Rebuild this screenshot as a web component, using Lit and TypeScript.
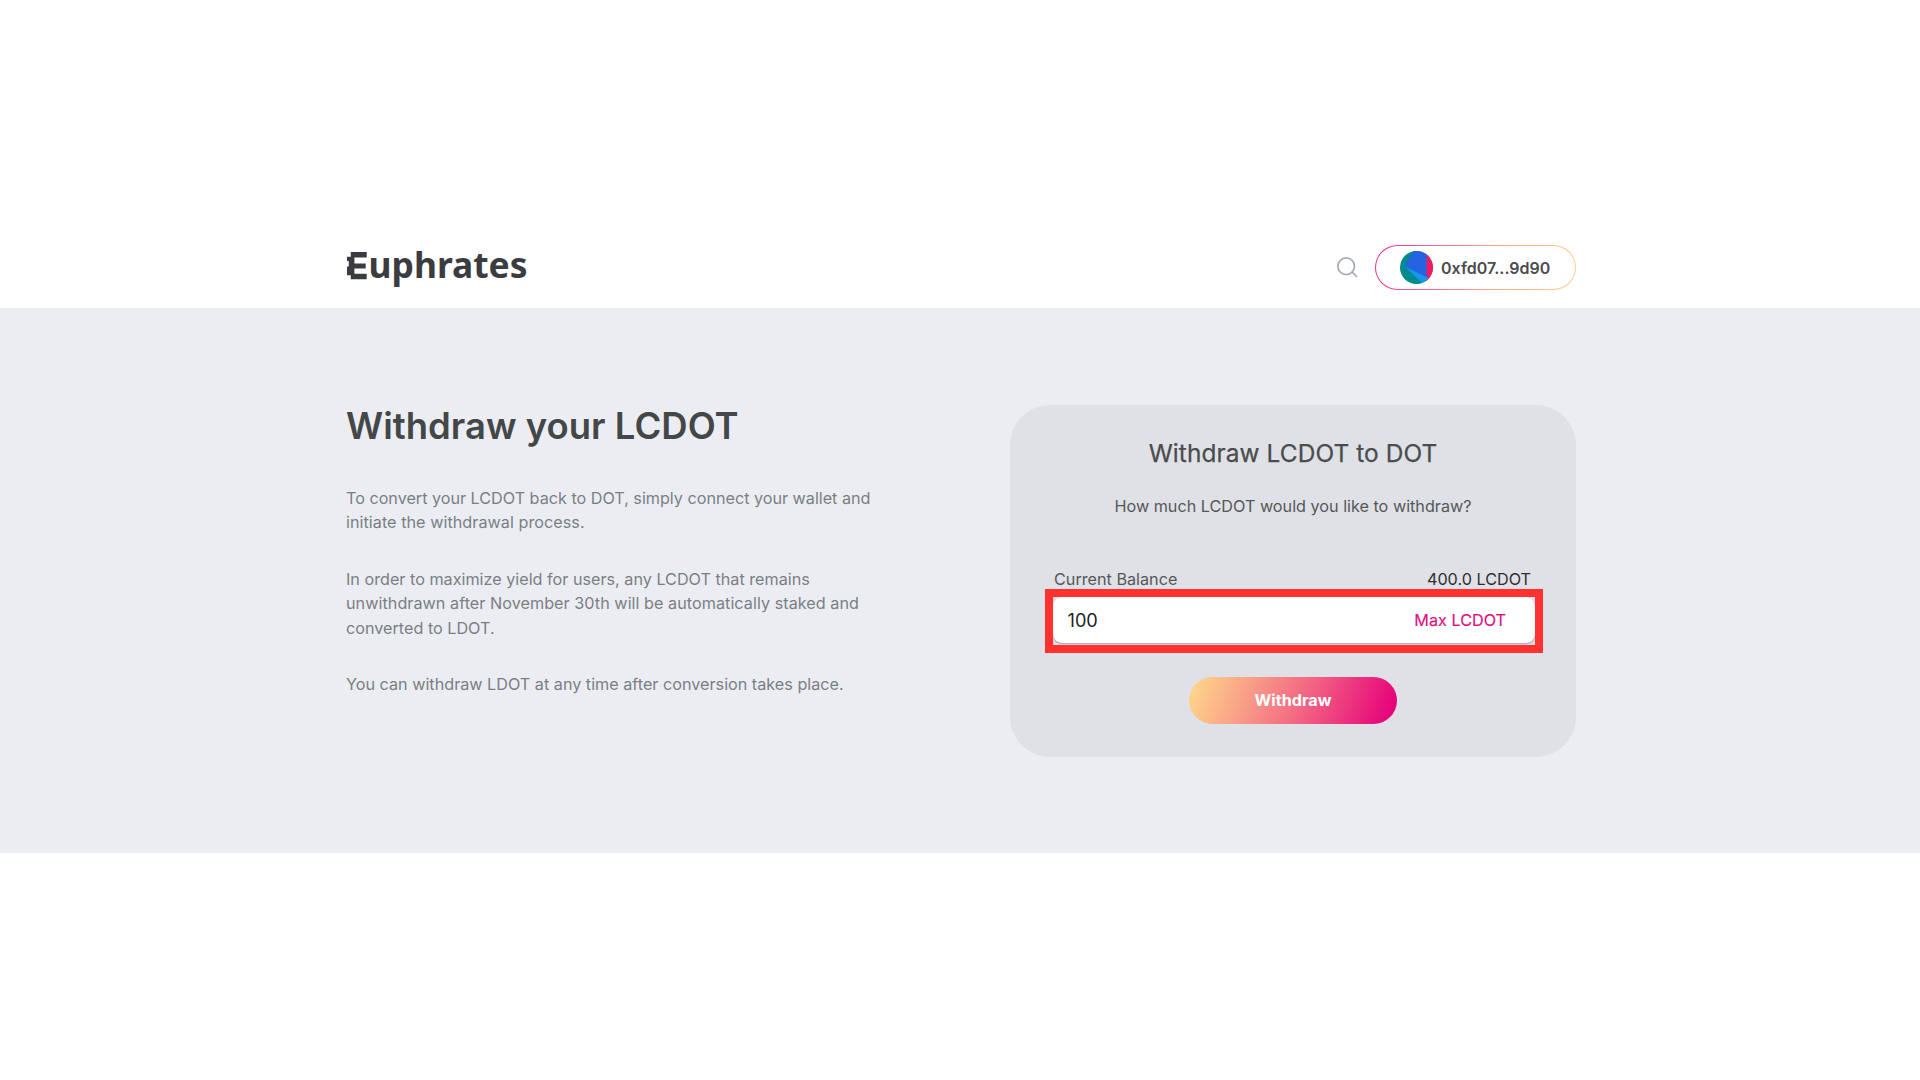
import { LitElement, html, css } from "lit";
import { customElement, state } from "lit/decorators.js";

@customElement("app-root")
export class AppRoot extends LitElement {
  @state() private amount = "100";

  static styles = css`
    :host { display: block; height: 1080px; background: #fff; overflow: hidden; box-sizing: border-box; padding-top: 183px; font-family: Inter, "Liberation Sans", sans-serif; color: #434747; }
    * { box-sizing: border-box; margin: 0; }
    .header { height: 125px; padding: 44px 344px 0 346px; display: flex; align-items: center; justify-content: space-between; }
    .logo, .search, .avatar { display: block; flex: none; }
    .logo { overflow: visible; }
    .word { font-family: "Noto Sans", sans-serif; font-weight: 700; font-size: 36.5px; fill: #3b3c3f; }
    .tools { display: flex; height: 81px; align-items: flex-start; padding-top: 18px; }
    .search { margin: 12px 17.5px 0 0; }
    .wallet { width: 201px; height: 45px; border: 1px solid transparent; border-radius: 23px; background: linear-gradient(#fff, #fff) padding-box, linear-gradient(105deg, #e9288b, #f9a08f 55%, #ffd08a) border-box; display: flex; align-items: center; padding-left: 24px; font: 600 16px/20px Inter, sans-serif; color: #4b4c4c; gap: 8px; white-space: nowrap; }
    .main { height: 545px; background: #ecedf3; padding: 97px 344px 0 346px; display: flex; justify-content: space-between; }
    .intro { width: 560px; font-size: 16.2px; line-height: 24.3px; color: #7a7f84; }
    .title { font-size: 36.45px; line-height: 44px; font-weight: 600; letter-spacing: 0.03px; color: #434747; margin-bottom: 38.2px; margin-top: -1px; white-space: nowrap; }
    .para { margin-bottom: 32.3px; white-space: nowrap; }
    .loose { letter-spacing: 0.035px; }
    .tight { letter-spacing: -0.015px; }
    .card { width: 566px; height: 352px; border-radius: 40px; background: #e0e1e6; padding: 32.4px 43px 0; display: flex; flex-direction: column; }
    .subtitle { text-align: center; font-size: 24.4px; line-height: 32px; font-weight: 400; letter-spacing: 0.1px; color: #4a4c4d; -webkit-text-stroke: 0.25px #4a4c4d; }
    .ask { text-align: center; font-size: 16.2px; line-height: 24px; margin-top: 24.6px; color: #555859; }
    .balance { display: flex; justify-content: space-between; font-size: 16.2px; line-height: 24px; margin-top: 49px; padding: 0 2px 0 1px; color: #555859; }
    .value { color: #2d2f30; }
    .field { position: relative; width: 482px; height: 46px; margin-top: 6px; background: #fff; border-radius: 9px; box-shadow: 0 1px 2px rgba(0,0,0,.3); display: flex; align-items: center; justify-content: space-between; padding: 0 29px 0 14.5px; }
    .amount { border: 0; outline: 0; padding: 0; width: 200px; background: none; font: 400 18.2px/24px Inter, sans-serif; color: #1e1e20; }
    .max { font-size: 16.2px; font-weight: 400; color: #e0107e; -webkit-text-stroke: 0.15px #e0107e; }
    .mark { position: absolute; left: -8px; top: -8px; width: 498px; height: 64px; border: 8px solid #ff3131; pointer-events: none; }
    .submit { width: 208px; height: 47px; margin: 34px auto 0; border: 0; padding: 0; border-radius: 24px; background: linear-gradient(110deg, #ffd48b 3%, #f26683 55%, #e6007a 97%); color: #fff; font: 700 16.2px/24px Inter, sans-serif; }
  `;

  render() {
    return html`
      <header class="header">
        <svg class="logo" width="190" height="60" viewBox="0 -5 190 60">
          <path fill="#3b3c3f" d="M4.800 9H20.700V14.500H8.400V20.500H19.700V25.500H8.400V30.800H20.700V36.300H4.800V32.300H1V23.500H2.800V18H1V13.800H4.800z" />
          <text class="word" x="22.500" y="35.300" textLength="159" lengthAdjust="spacingAndGlyphs">uphrates</text>
        </svg>
        <div class="tools">
          <svg class="search" width="21" height="21" viewBox="0 0 21 21" fill="none" stroke="#a7abb9" stroke-width="1.7" stroke-linecap="round">
            <circle cx="9.200" cy="9.200" r="8.300" /><path d="M15.200 15.200L19.500 19.500" />
          </svg>
          <div class="wallet">
            <svg class="avatar" width="33" height="33" viewBox="0 0 33 33">
              <clipPath id="disc"><circle cx="16.500" cy="16.500" r="16.500" /></clipPath>
              <g clip-path="url(#disc)">
                <path fill="#018b8d" d="M0 0h33v33H0z" />
                <path fill="#fa1762" d="M26.500 0h7v33h-7z" />
                <path fill="#1994ef" d="M4.500 15.300L26.500 25.500L28.500 28L22 32z" />
                <path fill="#2563e0" d="M4.500 15.300L15 -2H26.500V26z" />
              </g>
            </svg>
            <span>0xfd07...9d90</span>
          </div>
        </div>
      </header>
      <main class="main">
        <section class="intro">
          <h1 class="title">Withdraw your LCDOT</h1>
          <p class="para"><span class="tight">To convert your LCDOT back to DOT, simply connect your wallet and</span><br /><span class="loose">initiate the withdrawal process.</span></p>
          <p class="para">In order to maximize yield for users, any LCDOT that remains<br /><span class="loose">unwithdrawn after November 30th will be automatically staked and</span><br />converted to LDOT.</p>
          <p class="para">You can withdraw LDOT at any time after conversion takes place.</p>
        </section>
        <section class="card">
          <h2 class="subtitle">Withdraw LCDOT to DOT</h2>
          <p class="ask">How much LCDOT would you like to withdraw?</p>
          <div class="balance"><span>Current Balance</span><span class="value">400.0 LCDOT</span></div>
          <div class="field">
            <input class="amount" .value=${this.amount} @input=${(e: Event) => (this.amount = (e.target as HTMLInputElement).value)} />
            <span class="max">Max LCDOT</span>
            <div class="mark"></div>
          </div>
          <button class="submit">Withdraw</button>
        </section>
      </main>
    `;
  }
}
